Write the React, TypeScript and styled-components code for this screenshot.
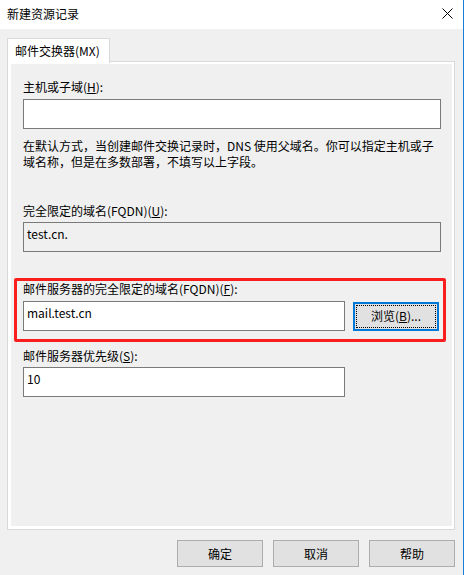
import React from "react";
import styled, { createGlobalStyle } from "styled-components";

const GlobalStyle = createGlobalStyle`
  html, body { margin: 0; padding: 0; background: #f0f0f0; }
  body { font-family: "Noto Sans CJK SC", "Noto Sans", sans-serif; font-size: 12px; color: #000; }
`;

const Win = styled.div`
  width: 464px;
  height: 575px;
  box-sizing: border-box;
  display: flex;
  flex-direction: column;
  border-right: 1px solid #1a7fd4;
  background: #f0f0f0;
`;

const TitleBar = styled.div`
  height: 29px;
  flex: none;
  background: #fff;
  display: flex;
  align-items: center;
  justify-content: space-between;
  padding: 0 10px 0 7px;
`;

const Title = styled.span`
  font-size: 12px;
  line-height: 16px;
  margin-top: -2px;
`;

const CloseIcon = styled.svg`
  width: 11px;
  height: 11px;
  margin-top: -3px;
`;

const Body = styled.div`
  flex: 1;
  display: flex;
  flex-direction: column;
  padding: 9px 8px 8px 7px;
  min-height: 0;
`;

const TabStrip = styled.div`
  display: flex;
  height: 24px;
  flex: none;
  position: relative;
  z-index: 1;
  margin-bottom: -1px;
`;

const Tab = styled.div`
  width: 103px;
  box-sizing: border-box;
  height: 25px;
  background: #fff;
  border: 1px solid #d9d9d9;
  border-bottom: none;
  padding-left: 7px;
  display: flex;
  align-items: center;
  padding-bottom: 1px;
`;

const Panel = styled.div`
  flex: 1;
  border: 1px solid #d9d9d9;
  background: #fff;
  padding: 2px 2px 3px 3px;
  display: flex;
  min-height: 0;
`;

const Page = styled.div`
  flex: 1;
  background: #f0f0f0;
  padding: 15px 11px 0 12px;
  display: flex;
  flex-direction: column;
`;

const Label = styled.div<{ $top?: number }>`
  line-height: 16px;
  margin-top: ${(p) => p.$top ?? 0}px;
  white-space: nowrap;
`;

const Field = styled.div<{ $readonly?: boolean; $width?: number; $top?: number }>`
  box-sizing: border-box;
  height: 30px;
  width: ${(p) => (p.$width ? `${p.$width}px` : "100%")};
  margin-top: ${(p) => p.$top ?? 4}px;
  border: 1px solid #7a7a7a;
  background: ${(p) => (p.$readonly ? "#f0f0f0" : "#fff")};
  padding: 3px 3px;
  line-height: 16px;
  flex: none;
`;

const Desc = styled.div`
  margin-top: 9px;
  line-height: 16px;
  white-space: nowrap;
`;

const Highlight = styled.div`
  margin: 26px -5px 0 -9px;
  border: 3px solid #f91d1d;
  border-radius: 2px;
  padding: 0 2px 8px 6px;
  display: flex;
  flex-direction: column;
`;

const Row = styled.div`
  display: flex;
  align-items: center;
  gap: 8px;
  margin-top: 4px;
`;

const BrowseButton = styled.div`
  box-sizing: border-box;
  width: 86px;
  height: 29px;
  border: 2px solid #0078d7;
  background: #e1e1e1;
  display: flex;
  align-items: center;
  justify-content: center;
  outline: 1px dotted #000;
  outline-offset: -4px;
  line-height: 16px;
`;

const Footer = styled.div`
  display: flex;
  justify-content: flex-end;
  gap: 10px;
  margin-top: 10px;
  flex: none;
`;

const Button = styled.div`
  box-sizing: border-box;
  width: 86px;
  height: 27px;
  border: 1px solid #adadad;
  background: #e1e1e1;
  display: flex;
  align-items: center;
  justify-content: center;
  line-height: 16px;
`;

const U = styled.span`
  text-decoration: underline;
`;

export default function App() {
  return (
    <>
      <GlobalStyle />
      <Win>
        <TitleBar>
          <Title>新建资源记录</Title>
          <CloseIcon viewBox="0 0 11 11">
            <path d="M0.5 0.5 L10.5 10.5 M10.5 0.5 L0.5 10.5" stroke="#000" strokeWidth="1" fill="none" />
          </CloseIcon>
        </TitleBar>
        <Body>
          <TabStrip>
            <Tab>邮件交换器(MX)</Tab>
          </TabStrip>
          <Panel>
            <Page>
              <Label>
                主机或子域(<U>H</U>):
              </Label>
              <Field />
              <Desc>
                在默认方式，当创建邮件交换记录时，DNS 使用父域名。你可以指定主机或子
                <br />
                域名称，但是在多数部署，不填写以上字段。
              </Desc>
              <Label $top={33}>
                完全限定的域名(FQDN)(<U>U</U>):
              </Label>
              <Field $readonly $top={3}>test.cn.</Field>
              <Highlight>
                <Label>
                  邮件服务器的完全限定的域名(FQDN)(<U>F</U>):
                </Label>
                <Row>
                  <Field $width={322} $top={0}>mail.test.cn</Field>
                  <BrowseButton>
                    浏览(<U>B</U>)...
                  </BrowseButton>
                </Row>
              </Highlight>
              <Label $top={6}>
                邮件服务器优先级(<U>S</U>):
              </Label>
              <Field $width={322} $top={3}>10</Field>
            </Page>
          </Panel>
          <Footer>
            <Button>确定</Button>
            <Button>取消</Button>
            <Button>帮助</Button>
          </Footer>
        </Body>
      </Win>
    </>
  );
}
